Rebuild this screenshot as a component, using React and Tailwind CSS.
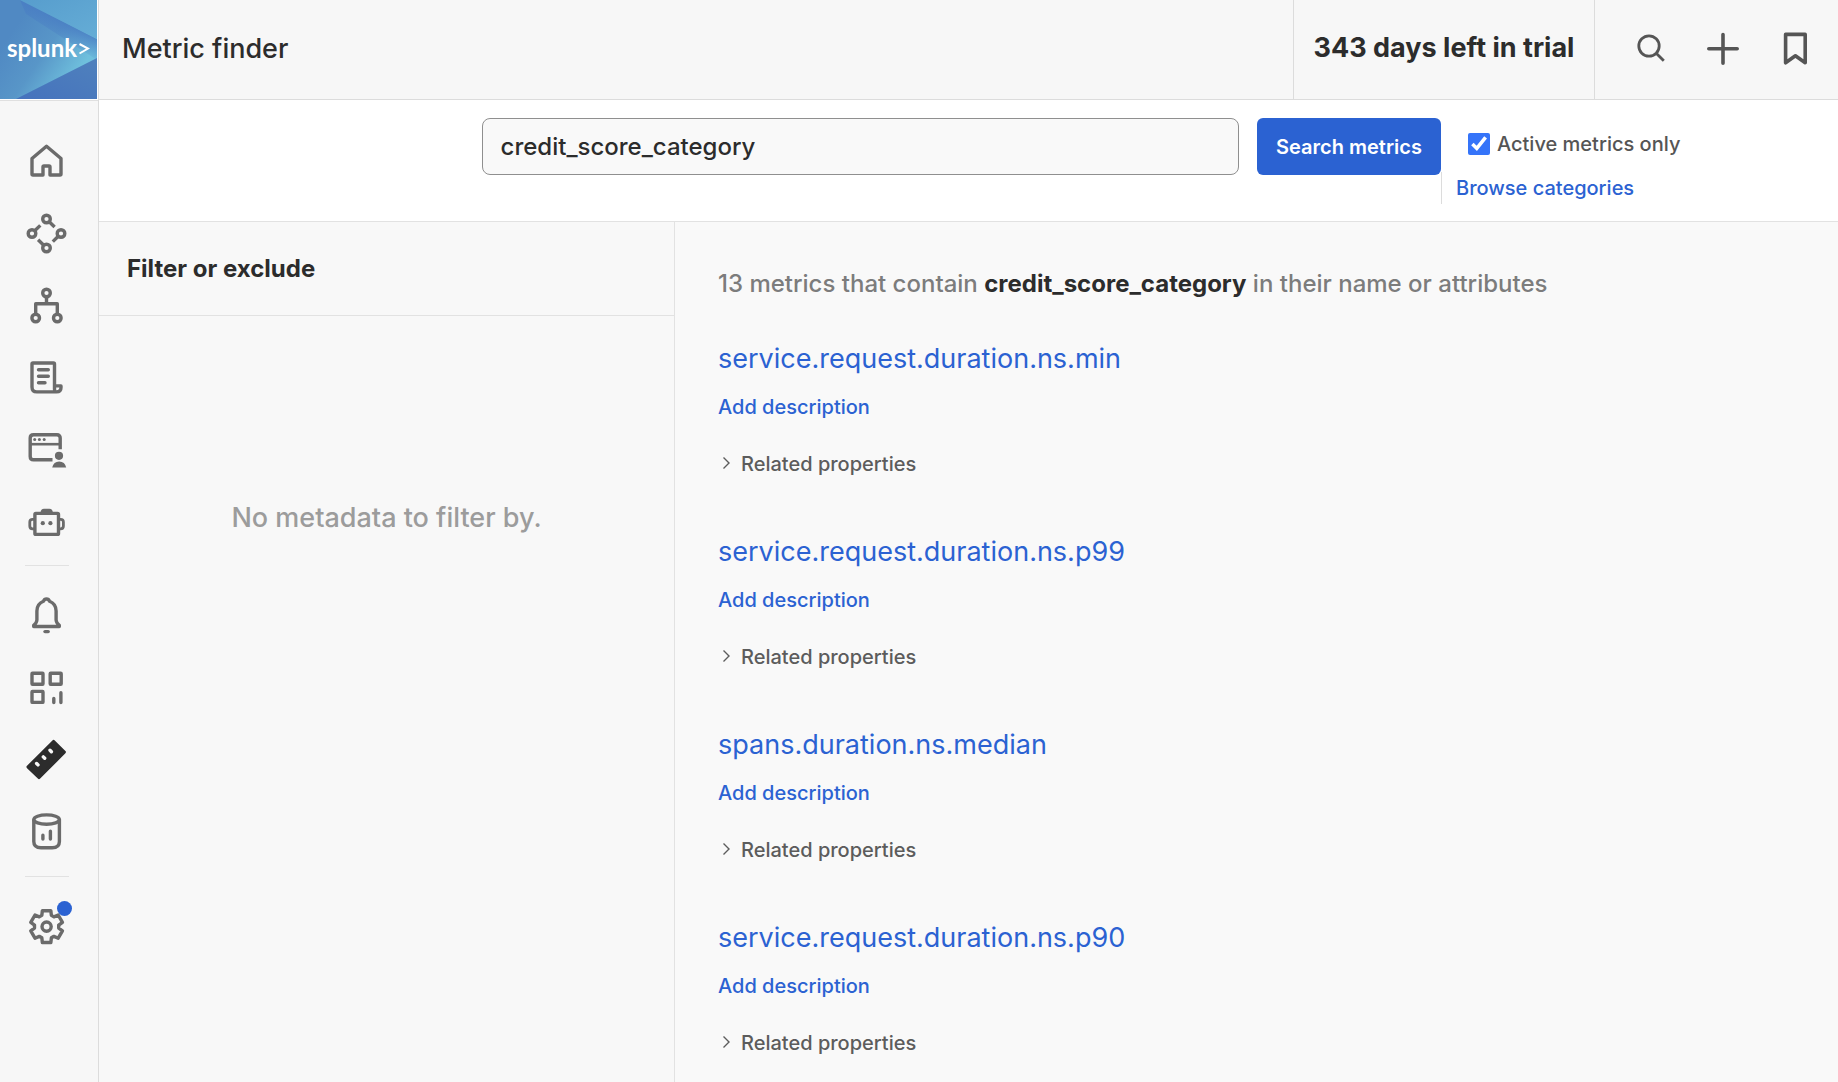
import React from "react";

function Icon({ children, className = "" }) {
  return (
    <svg
      viewBox="0 0 40 40"
      className={`size-10 overflow-visible ${className}`}
      fill="none"
      stroke="currentColor"
      strokeWidth="3.4"
      strokeLinejoin="round"
      aria-hidden="true"
    >
      {children}
    </svg>
  );
}

const HomeIcon = () => (
  <Icon>
    <path d="M16 34H6Q5 34 5 33V17.5L19.5 5.2 34 17.5V33Q34 34 33 34H23V26Q23 25 22 25H17Q16 25 16 26Z" />
  </Icon>
);

const NodesIcon = () => (
  <Icon>
    <circle cx="19.5" cy="6" r="3.8" />
    <circle cx="5" cy="20.5" r="3.8" />
    <circle cx="34" cy="20.5" r="3.8" />
    <circle cx="19.5" cy="35" r="3.8" />
    <path d="M8 17.5L13.3 12.4M22.5 9L27.6 14M31 23.5L25.8 28.6M16.5 32L11.1 26.8" />
  </Icon>
);

const TreeIcon = () => (
  <Icon>
    <circle cx="19.5" cy="8" r="3.8" />
    <circle cx="8.7" cy="33" r="3.8" />
    <circle cx="30.3" cy="33" r="3.8" />
    <path d="M19.5 12V18.7M8.7 29V18.7H30.3V29" />
  </Icon>
);

const LogIcon = () => (
  <Icon>
    <path d="M27.5 28.9V7Q27.5 6 26.5 6H6Q5 6 5 7V30Q5 34.9 9.8 34.9H29.5Q34 34.9 34 30.5V28.9H27.5V32Q27.5 34.9 29.5 34.9" />
    <path d="M11.5 12.7H21.3M11.5 19.3H21.3M11.5 25.7H18" strokeLinecap="round" />
  </Icon>
);

const BrowserUserIcon = () => (
  <Icon>
    <path d="M33.2 20.3V9Q33.2 5.8 30 5.8H6.5Q3.2 5.8 3.2 9V27.5Q3.2 30.8 6.5 30.8H25.5" />
    <path d="M3.2 15.2H33.2" strokeWidth="2.6" />
    <g fill="currentColor" stroke="none">
      <circle cx="7.7" cy="10.4" r="1.5" />
      <circle cx="12.4" cy="10.4" r="1.5" />
      <circle cx="17.2" cy="10.4" r="1.5" />
      <circle cx="32" cy="26.8" r="4.1" />
      <path d="M25.2 38.6Q26.5 32.4 32.2 32.4T39.2 38.6Z" />
    </g>
  </Icon>
);

const RobotIcon = () => (
  <Icon>
    <rect x="7.9" y="12.4" width="23.6" height="21" rx="1" />
    <path d="M13.5 12Q13.8 7.8 17 7.8H22.4Q25.6 7.8 25.9 12Z" fill="currentColor" stroke="none" />
    <path d="M7.5 18.3H5.6Q2.8 18.3 2.8 21V25Q2.8 27.8 5.6 27.8H7.5M31.9 18.3H33.6Q36.4 18.3 36.4 21V25Q36.4 27.8 33.6 27.8H31.9" strokeWidth="2.8" />
    <g fill="currentColor" stroke="none">
      <circle cx="15.8" cy="22.2" r="2.1" />
      <circle cx="23.4" cy="22.2" r="2.1" />
    </g>
  </Icon>
);

const BellIcon = () => (
  <Icon>
    <path d="M19.5 3Q21.7 3 22.6 5.3Q29.1 8 29.1 15V24Q29.3 27 32.3 29.4V30.5H6.7V29.4Q9.7 27 9.9 24V15Q9.9 8 16.4 5.3Q17.3 3 19.5 3Z" />
    <path d="M18 35.6H21.2" strokeLinecap="round" />
  </Icon>
);

const DashboardIcon = () => (
  <Icon>
    <rect x="5" y="5.2" width="11" height="11" rx=".5" />
    <rect x="23.2" y="5.2" width="11" height="11" rx=".5" />
    <rect x="5" y="23.4" width="11" height="11" rx=".5" />
    <path d="M26.8 30.5V34.5M33.9 24.8V34.5" strokeLinecap="round" />
  </Icon>
);

const RulerIcon = () => (
  <Icon className="text-[#2c2c2c]">
    <path d="M26.6 1.6L37.2 12.1 12 37.4 1.2 27Z" fill="currentColor" />
    <path d="M23 10.3L24.4 11.7M16.3 16.9L17.7 18.3M9.6 23.5L11 24.9" stroke="#f7f7f7" strokeLinecap="round" />
  </Icon>
);

const DataIcon = () => (
  <Icon>
    <ellipse cx="19.6" cy="7.6" rx="12.8" ry="4.7" />
    <path d="M6.8 7.6V29.5Q6.8 35.7 14 35.7H25.2Q32.4 35.7 32.4 29.5V7.6" />
    <path d="M15.9 23.3V27M23.4 19.3V27" strokeLinecap="round" />
  </Icon>
);

const gearPoints = [0, 60, 120, 180, 240, 300]
  .flatMap((base) =>
    [
      [-23, 12.2],
      [-15, 16.4],
      [15, 16.4],
      [23, 12.2],
    ].map(([offset, radius]) => {
      const angle = ((base + offset - 90) * Math.PI) / 180;
      return `${(19.6 + radius * Math.cos(angle)).toFixed(2)},${(19.6 + radius * Math.sin(angle)).toFixed(2)}`;
    })
  )
  .join(" ");

const GearIcon = () => (
  <Icon>
    <polygon points={gearPoints} />
    <circle cx="19.6" cy="19.6" r="4.6" />
  </Icon>
);

const mainNav = [
  ["Home", HomeIcon],
  ["APM", NodesIcon],
  ["Infrastructure", TreeIcon],
  ["Log Observer", LogIcon],
  ["Real user monitoring", BrowserUserIcon],
  ["Synthetics", RobotIcon],
];

const toolNav = [
  ["Alerts", BellIcon],
  ["Dashboards", DashboardIcon],
  ["Metric finder", RulerIcon],
  ["Data management", DataIcon],
];

const metrics = [
  "service.request.duration.ns.min",
  "service.request.duration.ns.p99",
  "spans.duration.ns.median",
  "service.request.duration.ns.p90",
];

function NavButton({ label, children }) {
  return (
    <button type="button" aria-label={label} className="relative flex h-[72px] w-full items-center justify-center">
      {children}
    </button>
  );
}

const NavDivider = () => <div className="mx-auto mt-2 mb-3.5 h-px w-11 bg-[#e2e2e2]" />;

function Logo() {
  return (
    <a href="#" className="relative flex h-[99px] w-[97px] items-center justify-center overflow-hidden bg-[#5089c3] pb-1">
      <svg viewBox="0 0 97 99" className="absolute inset-0 size-full" aria-hidden="true">
        <defs>
          <linearGradient id="logoBase" gradientUnits="userSpaceOnUse" x1="20" y1="20" x2="84" y2="64">
            <stop offset="0" stopColor="#5089c3" />
            <stop offset=".5" stopColor="#5896c8" />
            <stop offset="1" stopColor="#6fc0dd" />
          </linearGradient>
          <linearGradient id="logoShade" gradientUnits="userSpaceOnUse" x1="58" y1="16" x2="47" y2="40">
            <stop offset="0" stopColor="#4a7fc4" />
            <stop offset="1" stopColor="#4a7fc4" stopOpacity="0" />
          </linearGradient>
          <linearGradient id="logoTop" x1="0" y1="0" x2="1" y2="1">
            <stop offset="0" stopColor="#579dcd" />
            <stop offset="1" stopColor="#65add6" />
          </linearGradient>
          <linearGradient id="logoBottom" x1="0" y1="1" x2="1" y2="0">
            <stop offset="0" stopColor="#4572bd" />
            <stop offset="1" stopColor="#4f81bd" />
          </linearGradient>
        </defs>
        <rect width="97" height="99" fill="url(#logoBase)" />
        <path d="M20 0L97 39V60L26 14Z" fill="url(#logoShade)" />
        <path d="M20 0H97V39Z" fill="url(#logoTop)" />
        <path d="M16 99L97 58V99Z" fill="url(#logoBottom)" />
      </svg>
      <span className="relative flex items-center gap-0.5 font-['Lato',sans-serif] text-2xl font-bold text-white">
        splunk
        <svg viewBox="0 0 11 14" className="h-3.5 w-[11px]" fill="none" stroke="currentColor" strokeWidth="2" aria-hidden="true">
          <path d="M.5 3L9 7.5 .5 12.5" />
        </svg>
      </span>
    </a>
  );
}

function HeaderButton({ label, children }) {
  return (
    <button type="button" aria-label={label} className="flex h-[98px] w-[72px] items-center justify-center text-[#555]">
      {children}
    </button>
  );
}

function Metric({ name }) {
  return (
    <li className="h-[193px]">
      <h2 className="text-[27px] leading-9 text-[#2b62d2]">
        <a href="#">{name}</a>
      </h2>
      <button type="button" className="mt-4 block text-xl leading-7 font-medium text-[#2b62d2]">
        Add description
      </button>
      <button type="button" className="mt-[29px] flex items-center gap-2.5 pl-1 text-xl leading-7 font-medium text-[#5c5c5c]">
        <svg viewBox="0 0 9 14" className="h-3.5 w-[9px]" fill="none" stroke="currentColor" strokeWidth="1.4" aria-hidden="true">
          <path d="M1.5 .5L7 6 1.5 11.5" />
        </svg>
        Related properties
      </button>
    </li>
  );
}

export default function App() {
  return (
    <div className="flex h-screen overflow-hidden bg-[#f9f9f9] font-['Inter',sans-serif] text-[#2c2c2c]">
      <aside className="w-[99px] shrink-0 border-r border-[#dcdcdc] bg-[#f7f7f7]">
        <div className="border-b border-[#e0e0e0] bg-white pb-px">
          <Logo />
        </div>
        <nav aria-label="Main" className="pt-6 pr-1 text-[#6b6b6b]">
          {mainNav.map(([label, Glyph]) => (
            <NavButton key={label} label={label}>
              <Glyph />
            </NavButton>
          ))}
          <NavDivider />
          {toolNav.map(([label, Glyph]) => (
            <NavButton key={label} label={label}>
              <Glyph />
            </NavButton>
          ))}
          <NavDivider />
          <NavButton label="Settings">
            <GearIcon />
            <span className="absolute top-2.5 right-[22px] size-[15px] rounded-full bg-[#2b62d2]" />
          </NavButton>
        </nav>
      </aside>

      <div className="flex min-w-0 flex-1 flex-col">
        <header className="flex h-[100px] shrink-0 border-b border-[#dcdcdc] bg-[#f7f7f7]">
          <h1 className="flex flex-1 items-center pl-[23px] text-[27px] font-medium">Metric finder</h1>
          <div className="flex w-[302px] items-center justify-center border-x border-[#dcdcdc] pb-0.5 text-[27px] font-bold whitespace-nowrap">
            343 days left in trial
          </div>
          <div className="flex pr-[7px] pl-5">
            <HeaderButton label="Search">
              <svg viewBox="0 0 36 36" className="size-9" fill="none" stroke="currentColor" strokeWidth="2.8" aria-hidden="true">
                <circle cx="16" cy="15" r="10.2" />
                <path d="M23.2 22.2L30.8 29.8" />
              </svg>
            </HeaderButton>
            <HeaderButton label="Add">
              <svg viewBox="0 0 36 36" className="size-9" fill="none" stroke="currentColor" strokeWidth="3.6" strokeLinecap="round" aria-hidden="true">
                <path d="M18 3.6V32.2M3.8 17.8H32.2" />
              </svg>
            </HeaderButton>
            <HeaderButton label="Bookmarks">
              <svg viewBox="0 0 36 36" className="size-9" fill="none" stroke="currentColor" strokeWidth="3.6" strokeLinejoin="round" aria-hidden="true">
                <path d="M8.6 3.4H28.2V31.8L18.4 24.8 8.6 31.8Z" />
              </svg>
            </HeaderButton>
          </div>
        </header>

        <form className="flex h-[122px] shrink-0 items-start border-b border-[#e2e2e2] bg-white pt-[18px] pl-[22%]" onSubmit={(e) => e.preventDefault()}>
          <input
            type="text"
            aria-label="Search metrics"
            defaultValue="credit_score_category"
            className="h-[57px] min-w-0 flex-1 rounded-lg border border-[#8f8f8f] bg-[#f9f9f9] px-[18px] text-2xl font-medium outline-none"
          />
          <button type="submit" className="ml-[18px] h-[57px] w-[184px] shrink-0 rounded-md bg-[#2b62d2] text-xl font-semibold text-white">
            Search metrics
          </button>
          <div className="w-[397px] shrink-0">
            <label className="flex items-center gap-[7px] pt-3 pl-[27px] text-xl leading-7 font-medium text-[#555]">
              <input type="checkbox" defaultChecked className="size-[22px] accent-[#3574f9]" />
              Active metrics only
            </label>
            <div className="mt-3.5 border-l border-[#dcdcdc] py-0.5 pl-3.5">
              <a href="#" className="block text-xl leading-7 font-medium text-[#2b62d2]">
                Browse categories
              </a>
            </div>
          </div>
        </form>

        <div className="flex min-h-0 flex-1">
          <section className="w-[576px] shrink-0 border-r border-[#e2e2e2] bg-[#f8f8f8]">
            <h2 className="flex h-[94px] items-center border-b border-[#e2e2e2] pl-7 text-2xl font-bold">Filter or exclude</h2>
            <p className="pt-[182px] text-center text-[27px] leading-10 font-medium text-[#9c9c9c]">No metadata to filter by.</p>
          </section>
          <main className="flex-1 overflow-hidden pt-11 pl-[43px]">
            <p className="text-2xl leading-9 font-medium text-[#7c7c7c]">
              13 metrics that contain <strong className="font-bold text-[#2c2c2c]">credit_score_category</strong> in their name or attributes
            </p>
            <ul className="mt-[39px]">
              {metrics.map((name) => (
                <Metric key={name} name={name} />
              ))}
            </ul>
          </main>
        </div>
      </div>
    </div>
  );
}
